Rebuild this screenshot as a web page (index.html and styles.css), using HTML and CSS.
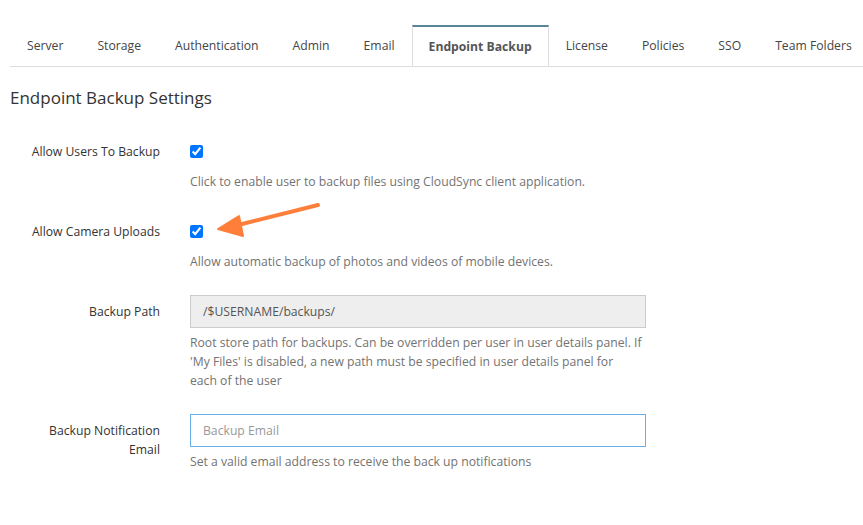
FILE: index.html
```html
<!DOCTYPE html>
<html lang="en">
<head>
  <meta charset="UTF-8" />
  <meta name="viewport" content="width=device-width, initial-scale=1.0" />
  <title>Endpoint Backup Settings</title>
  <link rel="stylesheet" href="styles.css">
</head>
<body>
  <ul class="tabs">
    <li class="tab">Server</li>
    <li class="tab">Storage</li>
    <li class="tab">Authentication</li>
    <li class="tab">Admin</li>
    <li class="tab">Email</li>
    <li class="tab active">Endpoint Backup</li>
    <li class="tab">License</li>
    <li class="tab">Policies</li>
    <li class="tab">SSO</li>
    <li class="tab">Team Folders</li>
  </ul>

  <h3 class="title">Endpoint Backup Settings</h3>

  <div class="form">
    <div class="row">
      <label class="label">Allow Users To Backup</label>
      <div class="field">
        <div class="control check"><input type="checkbox" checked /></div>
        <p class="help">Click to enable user to backup files using CloudSync client application.</p>
      </div>
    </div>

    <div class="row">
      <label class="label">Allow Camera Uploads</label>
      <div class="field">
        <div class="control check"><input type="checkbox" checked /></div>
        <p class="help">Allow automatic backup of photos and videos of mobile devices.</p>
      </div>
    </div>

    <div class="row">
      <label class="label">Backup Path</label>
      <div class="field">
        <input class="control text readonly" type="text" value="/$USERNAME/backups/" readonly />
        <p class="help">Root store path for backups. Can be overridden per user in user details panel. If 'My Files' is disabled, a new path must be specified in user details panel for each&nbsp;of&nbsp;the user</p>
      </div>
    </div>

    <div class="row">
      <label class="label">Backup Notification Email</label>
      <div class="field">
        <input class="control text focused" type="text" placeholder="Backup Email" />
        <p class="help">Set a valid email address to receive the back up notifications</p>
      </div>
    </div>
  </div>

  <!-- annotation arrow pointing at the camera uploads checkbox -->
  <svg class="arrow" width="110" height="40" viewBox="0 0 110 40">
    <line x1="106" y1="3" x2="26" y2="23" stroke="#ff7f3a" stroke-width="4" stroke-linecap="round" />
    <polygon points="6,27 27,14 31,34" fill="#ff7f3a" stroke="#ff7f3a" stroke-width="2" stroke-linejoin="round" />
  </svg>
</body>
</html>
```

FILE: styles.css
```css
body {
  margin: 0;
  padding: 0 0 0 10px;
  font-family: "Open Sans", "Liberation Sans", sans-serif;
  font-size: 12.2px;
  line-height: 19px;
  color: #333;
  background: #fff;
}
.tabs {
  display: flex;
  list-style: none;
  margin: 0;
  padding: 25px 0 0 0;
  border-bottom: 1px solid #ddd;
}
.tab {
  padding: 0 16px;
  height: 40px;
  line-height: 42px;
  border: 1px solid transparent;
  border-top-width: 0;
  color: #444;
  white-space: nowrap;
  cursor: pointer;
}
.tab.active {
  border-color: #ddd;
  border-top: 2px solid #5a8499;
  height: 39px;
  line-height: 40px;
  margin-bottom: -1px;
  background: #fff;
  font-weight: bold;
  color: #555;
}
.title {
  margin: 19px 0 25px 0;
  font-size: 17px;
  font-weight: normal;
  line-height: 24px;
  color: #333;
}
.row {
  display: flex;
  margin-bottom: 24px;
}
.label {
  width: 135px;
  padding: 7px 30px 0 15px;
  text-align: right;
  color: #333;
}
.field {
  width: 456px;
}
.control {
  height: 33px;
  box-sizing: border-box;
}
.check {
  display: flex;
  align-items: center;
}
.check input {
  margin: 0;
  width: 13px;
  height: 13px;
}
.text {
  display: block;
  width: 100%;
  padding: 0 12px;
  border: 1px solid #ccc;
  font-family: inherit;
  font-size: 12.2px;
  color: #555;
  outline: none;
}
.readonly {
  background: #eee;
}
.focused {
  border-color: #66afe9;
}
.text::placeholder {
  color: #999;
}
.help {
  margin: 4px 0 0 0;
  color: #737373;
}
.text + .help {
  margin-top: 5px;
}
.arrow {
  position: absolute;
  left: 212px;
  top: 202px;
}
```
